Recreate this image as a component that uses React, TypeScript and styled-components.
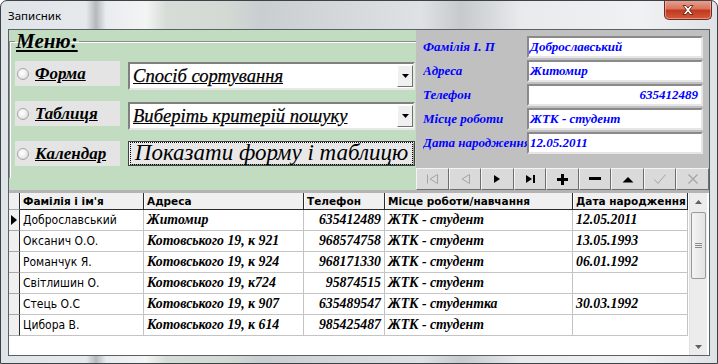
import React from "react";
import styled, { createGlobalStyle } from "styled-components";

const GlobalStyle = createGlobalStyle`
  html, body {
    margin: 0;
    padding: 0;
    background: #ffffff;
  }
  body {
    width: 718px;
    height: 364px;
    overflow: hidden;
  }
`;

const serif = `"Liberation Serif", "Times New Roman", serif`;
const sans = `"DejaVu Sans", Tahoma, sans-serif`;
const narrowSans = `"DejaVu Sans Condensed", "DejaVu Sans", Tahoma, sans-serif`;

const Window = styled.div`
  width: 718px;
  height: 364px;
  box-sizing: border-box;
  display: flex;
  flex-direction: column;
  border: 1px solid #3c4248;
  border-radius: 7px 7px 0 0;
  overflow: hidden;
  background: linear-gradient(
    90deg,
    #dfe4e8 0,
    #e6e9ec 85px,
    #b4b9be 95px,
    #e9ecee 105px,
    #f3f4f4 145px,
    #d6ddd6 165px,
    #d3dad3 225px,
    #c9ced1 260px,
    #d3d7d9 330px,
    #dfe2e4 420px,
    #c6cacd 460px,
    #e8eaec 520px,
    #f0f1f2 640px,
    #dfe2e5 718px
  );
`;

const TitleBar = styled.div`
  height: 28px;
  display: flex;
  align-items: flex-start;
  padding-left: 7px;
`;

const Title = styled.span`
  margin-top: 7px;
  font-family: "Noto Sans", "Open Sans", sans-serif;
  font-size: 11.5px;
  color: #000;
`;

const CloseButton = styled.div`
  margin-left: auto;
  margin-right: 5px;
  margin-top: -1px;
  width: 48px;
  height: 20px;
  box-sizing: border-box;
  border: 1px solid #6b2a20;
  border-top: none;
  border-radius: 0 0 5px 5px;
  background: linear-gradient(180deg, #e9a594 0, #d9745e 45%, #c2391f 55%, #d25a3c 100%);
  box-shadow: inset 0 0 0 1px rgba(255, 210, 200, 0.5);
  display: flex;
  align-items: center;
  justify-content: center;
`;

const Body = styled.div`
  flex: 1;
  display: flex;
  padding: 0 7px 7px 7px;
  min-height: 0;
`;

const Client = styled.div`
  flex: 1;
  border: 1px solid #5a6066;
  background: #ffffff;
  display: flex;
  flex-direction: column;
  min-height: 0;
  overflow: hidden;
`;

const Top = styled.div`
  height: 160px;
  display: flex;
`;

const GreenPanel = styled.div`
  width: 407px;
  background: #c2dcc2;
  box-sizing: border-box;
`;

const Group = styled.fieldset`
  margin: 0;
  padding: 9px 0 0 5px;
  height: 148px;
  box-sizing: border-box;
  border: 1px solid #8c8c8c;
  border-right: none;
  border-bottom: none;
  box-shadow: inset 1px 1px 0 #ffffff;
`;

const Legend = styled.legend`
  padding: 0 1px;
  margin-left: 0;
  font-family: ${serif};
  font-style: italic;
  font-weight: bold;
  font-size: 21px;
  line-height: 22px;
  text-decoration: underline;
  color: #000;
`;

const MenuRow = styled.div`
  display: flex;
  align-items: flex-start;
  gap: 8px;
  height: 40px;
`;

const Choice = styled.label`
  width: 105px;
  height: 25px;
  background: #e4e4e4;
  display: flex;
  align-items: center;
  gap: 6px;
  padding-left: 2px;
  box-sizing: border-box;
  font-family: ${serif};
  font-style: italic;
  font-weight: bold;
  font-size: 17px;
  text-decoration: underline;
  color: #000;
  white-space: nowrap;
`;

const Radio = styled.span`
  width: 10px;
  height: 10px;
  border-radius: 50%;
  border: 1px solid #a8a8a8;
  background: radial-gradient(circle at 40% 40%, #ffffff 0, #f0f0f0 45%, #c8c8c8 100%);
  flex: none;
`;

const Combo = styled.div`
  width: 287px;
  height: 28px;
  margin-top: 1px;
  box-sizing: border-box;
  background: #fff;
  border: 2px solid;
  border-color: #808080 #e8e8e8 #e8e8e8 #808080;
  display: flex;
  align-items: center;
`;

const ComboText = styled.span`
  flex: 1;
  padding-left: 3px;
  font-family: ${serif};
  font-style: italic;
  font-size: 18.6px;
  text-decoration: underline;
  color: #000;
  white-space: nowrap;
  -webkit-text-stroke: 0.25px #000;
`;

const ComboArrow = styled.span`
  width: 16px;
  height: 22px;
  box-sizing: border-box;
  background: #f0f0f0;
  border: 1px solid;
  border-color: #ffffff #707070 #707070 #ffffff;
  display: flex;
  align-items: center;
  justify-content: center;
`;

const ShowButton = styled.button`
  width: 287px;
  height: 25px;
  padding: 0 2px;
  box-sizing: border-box;
  background: #e8e8e8;
  border: 1px solid #404040;
  box-shadow: inset 1px 1px 0 #ffffff, inset -1px -1px 0 #a0a0a0;
  font-family: ${serif};
  font-style: italic;
  font-size: 23px;
  line-height: 20px;
  color: #000;
  cursor: default;
  span {
    display: block;
    outline: 1px dotted #000;
    padding-bottom: 1px;
    white-space: nowrap;
  }
`;

const GrayPanel = styled.div`
  flex: 1;
  background: #c0c0c0;
  display: flex;
  flex-direction: column;
  overflow: hidden;
`;

const Fields = styled.div`
  padding: 5px 0 0 7px;
  display: flex;
  flex-direction: column;
  gap: 1px;
`;

const FieldRow = styled.div`
  display: grid;
  grid-template-columns: 104px 176px;
  height: 23px;
  align-items: center;
`;

const FieldLabel = styled.span`
  font-family: ${serif};
  font-style: italic;
  font-weight: bold;
  font-size: 13px;
  color: #0000ff;
  white-space: nowrap;
  overflow: hidden;
`;

const FieldBox = styled.div<{ $right?: boolean }>`
  height: 22px;
  box-sizing: border-box;
  background: #fff;
  border: 2px solid;
  border-color: #8a8a8a #e6e6e6 #e6e6e6 #8a8a8a;
  padding: 0 3px 0 1px;
  display: flex;
  align-items: center;
  justify-content: ${(p) => (p.$right ? "flex-end" : "flex-start")};
  font-family: ${serif};
  font-style: italic;
  font-weight: bold;
  font-size: 13px;
  color: #0000ff;
`;

const Navigator = styled.div`
  margin-top: auto;
  height: 22px;
  display: grid;
  grid-template-columns: repeat(9, 1fr);
`;

const NavButton = styled.div`
  box-sizing: border-box;
  background: #dadada;
  border: 1px solid;
  border-color: #f4f4f4 #6e6e6e #6e6e6e #f4f4f4;
  display: flex;
  align-items: center;
  justify-content: center;
`;

const GridArea = styled.div`
  flex: 1;
  display: flex;
  border-top: 3px solid #b4b4b4;
  min-height: 0;
`;

const Table = styled.div`
  width: 680px;
  display: grid;
  grid-template-columns: 11px 124px 160px 81px 188px 115px;
  grid-auto-rows: 21px;
  grid-template-rows: 17px;
  align-content: start;
`;

const HeadCell = styled.div`
  background: #f0f0f0;
  border-right: 1px solid #2a2a2a;
  border-bottom: 1px solid #2a2a2a;
  box-shadow: inset 1px 0 0 #ffffff;
  padding-left: 3px;
  font-family: ${sans};
  font-weight: bold;
  font-size: 10.5px;
  line-height: 16px;
  color: #000;
  white-space: nowrap;
  overflow: hidden;
`;

const Selector = styled.div`
  background: #f0f0f0;
  border-right: 1px solid #2a2a2a;
  border-bottom: 1px solid #a8a8a8;
  display: flex;
  align-items: center;
  justify-content: center;
`;

const Cell = styled.div<{ $plain?: boolean; $right?: boolean }>`
  border-right: 1px solid #c4c4c4;
  border-bottom: 1px solid #c4c4c4;
  padding: 0 3px;
  display: flex;
  align-items: center;
  justify-content: ${(p) => (p.$right ? "flex-end" : "flex-start")};
  font-family: ${(p) => (p.$plain ? narrowSans : serif)};
  font-style: ${(p) => (p.$plain ? "normal" : "italic")};
  font-weight: ${(p) => (p.$plain ? "normal" : "bold")};
  font-size: ${(p) => (p.$plain ? "12px" : "13.8px")};
  color: #000;
  white-space: nowrap;
  overflow: hidden;
`;

const Scrollbar = styled.div`
  margin-left: auto;
  width: 17px;
  margin-right: 2px;
  background: #ececec;
  border-left: 1px solid #e0e0e0;
  display: flex;
  flex-direction: column;
`;

const ScrollArrow = styled.div`
  height: 17px;
  display: flex;
  align-items: center;
  justify-content: center;
`;

const Thumb = styled.div`
  margin: 2px 1px 0 1px;
  height: 65px;
  border: 1px solid #9a9a9a;
  border-radius: 2px;
  background: linear-gradient(90deg, #f4f4f4, #e2e2e2);
  display: flex;
  align-items: center;
  justify-content: center;
`;

const Spacer = styled.div`
  flex: 1;
`;

const rows = [
  ["Доброславський", "Житомир", "635412489", "ЖТК - студент", "12.05.2011"],
  ["Оксанич О.О.", "Котовського 19, к 921", "968574758", "ЖТК - студент", "13.05.1993"],
  ["Романчук Я.", "Котовського 19, к 924", "968171330", "ЖТК - студент", "06.01.1992"],
  ["Світлишин О.", "Котовського 19, к724", "95874515", "ЖТК - студент", ""],
  ["Стець О.С", "Котовського 19, к 907", "635489547", "ЖТК - студентка", "30.03.1992"],
  ["Цибора В.", "Котовського 19, к 614", "985425487", "ЖТК - студент", ""],
];

const fields: [string, string, boolean?][] = [
  ["Фамілія І. П", "Доброславський"],
  ["Адреса", "Житомир"],
  ["Телефон", "635412489", true],
  ["Місце роботи", "ЖТК - студент"],
  ["Дата народження", "12.05.2011"],
];

const dim = "#a4a4a4";

const navIcons = [
  <svg width="14" height="12" key="first">
    <path d="M2.5 1.5v9M12.5 1.5L5 6l7.5 4.5z" fill="none" stroke={dim} />
  </svg>,
  <svg width="12" height="12" key="prior">
    <path d="M10.5 1.5L3 6l7.5 4.5z" fill="none" stroke={dim} />
  </svg>,
  <svg width="10" height="10" key="next">
    <path d="M2 1l6 4-6 4z" fill="#000" />
  </svg>,
  <svg width="12" height="10" key="last">
    <path d="M2 1l6 4-6 4z M9 1h2v8h-2z" fill="#000" />
  </svg>,
  <svg width="11" height="11" key="insert">
    <path d="M4 0h3v4h4v3h-4v4h-3v-4h-4v-3h4z" fill="#000" />
  </svg>,
  <svg width="12" height="4" key="delete">
    <rect width="12" height="3" fill="#000" />
  </svg>,
  <svg width="12" height="7" key="edit">
    <path d="M0.5 6.5L6 1l5.5 5.5z" fill="#000" />
  </svg>,
  <svg width="14" height="12" key="post">
    <path d="M1.5 6.5l3.5 4 7.5-9" fill="none" stroke={dim} />
  </svg>,
  <svg width="12" height="12" key="cancel">
    <path d="M1.5 1.5l9 9M10.5 1.5l-9 9" fill="none" stroke={dim} strokeWidth="1.2" />
  </svg>,
];

const DownTri = () => (
  <svg width="7" height="4">
    <path d="M0 0h7L3.5 4z" fill="#000" />
  </svg>
);

export default function App() {
  return (
    <>
      <GlobalStyle />
      <Window>
        <TitleBar>
          <Title>Записник</Title>
          <CloseButton>
            <svg width="14" height="12" viewBox="0 0 14 12">
              <path
                d="M2 1.5h3l2 2.6 2-2.6h3l-3.5 4.5 3.5 4.5h-3l-2-2.6-2 2.6h-3l3.5-4.5z"
                fill="#ffffff"
                stroke="#5a2418"
                strokeWidth="0.9"
              />
            </svg>
          </CloseButton>
        </TitleBar>
        <Body>
          <Client>
            <Top>
              <GreenPanel>
                <Group>
                  <Legend>Меню:</Legend>
                  <MenuRow>
                    <Choice>
                      <Radio />
                      Форма
                    </Choice>
                    <Combo>
                      <ComboText>Спосіб сортування</ComboText>
                      <ComboArrow>
                        <DownTri />
                      </ComboArrow>
                    </Combo>
                  </MenuRow>
                  <MenuRow>
                    <Choice>
                      <Radio />
                      Таблиця
                    </Choice>
                    <Combo>
                      <ComboText>Виберіть критерій пошуку</ComboText>
                      <ComboArrow>
                        <DownTri />
                      </ComboArrow>
                    </Combo>
                  </MenuRow>
                  <MenuRow>
                    <Choice>
                      <Radio />
                      Календар
                    </Choice>
                    <ShowButton>
                      <span>Показати форму і таблицю</span>
                    </ShowButton>
                  </MenuRow>
                </Group>
              </GreenPanel>
              <GrayPanel>
                <Fields>
                  {fields.map(([label, value, right]) => (
                    <FieldRow key={label}>
                      <FieldLabel>{label}</FieldLabel>
                      <FieldBox $right={right}>{value}</FieldBox>
                    </FieldRow>
                  ))}
                </Fields>
                <Navigator>
                  {navIcons.map((icon, i) => (
                    <NavButton key={i}>{icon}</NavButton>
                  ))}
                </Navigator>
              </GrayPanel>
            </Top>
            <GridArea>
              <Table>
                <Selector />
                <HeadCell>Фамілія і ім'я</HeadCell>
                <HeadCell>Адреса</HeadCell>
                <HeadCell>Телефон</HeadCell>
                <HeadCell>Місце роботи/навчання</HeadCell>
                <HeadCell>Дата народження</HeadCell>
                {rows.map((r, i) => (
                  <React.Fragment key={i}>
                    <Selector>
                      {i === 0 && (
                        <svg width="6" height="10">
                          <path d="M0 0l6 5-6 5z" fill="#000" />
                        </svg>
                      )}
                    </Selector>
                    <Cell $plain>{r[0]}</Cell>
                    <Cell>{r[1]}</Cell>
                    <Cell $right>{r[2]}</Cell>
                    <Cell>{r[3]}</Cell>
                    <Cell>{r[4]}</Cell>
                  </React.Fragment>
                ))}
              </Table>
              <Scrollbar>
                <ScrollArrow>
                  <svg width="7" height="4">
                    <path d="M0 4h7L3.5 0z" fill="#606060" />
                  </svg>
                </ScrollArrow>
                <Thumb>
                  <svg width="7" height="6">
                    <path d="M0 0.5h7M0 2.5h7M0 4.5h7" stroke="#8a8a8a" />
                  </svg>
                </Thumb>
                <Spacer />
                <ScrollArrow>
                  <svg width="7" height="4">
                    <path d="M0 0h7L3.5 4z" fill="#606060" />
                  </svg>
                </ScrollArrow>
              </Scrollbar>
            </GridArea>
          </Client>
        </Body>
      </Window>
    </>
  );
}
